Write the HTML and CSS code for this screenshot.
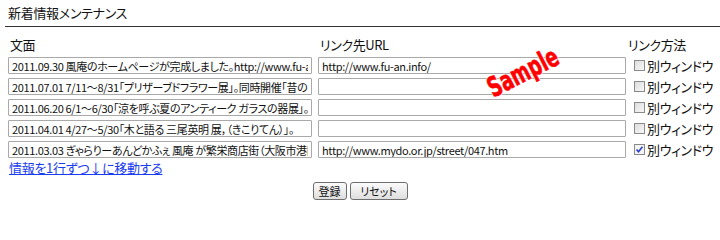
FILE: index.html
```html
<!DOCTYPE html>
<html lang="ja">
<head>
<meta charset="utf-8">
<title>新着情報メンテナンス</title>
<link rel="stylesheet" href="styles.css">
</head>
<body>
<div class="page">
  <h1 class="title">新着情報メンテナンス</h1>
  <div class="rule"></div>
  <form class="form">
    <div class="grid">
      <div class="head">文面</div>
      <div class="head">リンク先URL</div>
      <div class="head head-last">リンク方法</div>

      <input class="field" type="text" value="2011.09.30 風庵のホームページが完成しました。http://www.fu-an.info/">
      <input class="field" type="text" value="http://www.fu-an.info/">
      <label class="opt"><span class="box"></span>別ウィンドウ</label>

      <input class="field" type="text" value="2011.07.01 7/11～8/31「プリザーブドフラワー展」。同時開催「昔のあかり展」">
      <input class="field" type="text" value="">
      <label class="opt"><span class="box"></span>別ウィンドウ</label>

      <input class="field" type="text" value="2011.06.20 6/1～6/30「涼を呼ぶ夏のアンティーク ガラスの器展」。同時開催">
      <input class="field" type="text" value="">
      <label class="opt"><span class="box"></span>別ウィンドウ</label>

      <input class="field" type="text" value="2011.04.01 4/27～5/30「木と語る 三尾英明 展，（きこりてん）」。">
      <input class="field" type="text" value="">
      <label class="opt"><span class="box"></span>別ウィンドウ</label>

      <input class="field" type="text" value="2011.03.03 ぎゃらりーあんどかふぇ 風庵 が繁栄商店街（大阪市港区）（">
      <input class="field" type="text" value="http://www.mydo.or.jp/street/047.htm">
      <label class="opt"><span class="box checked"><svg viewBox="0 0 9 9" width="9" height="9"><path d="M1.5 4.5 L3.5 6.8 L7.5 1.8" fill="none" stroke="#2a3fd0" stroke-width="1.6"/></svg></span>別ウィンドウ</label>
    </div>
    <a class="move" href="#">情報を1行ずつ↓に移動する</a>
    <div class="buttons">
      <button type="button" class="btn btn-save">登録</button>
      <button type="reset" class="btn btn-reset">リセット</button>
    </div>
  </form>
  <div class="sample">Sample</div>
</div>
</body>
</html>
```
FILE: styles.css
```css
html, body {
  margin: 0;
  padding: 0;
  background: #ffffff;
}
body {
  font-family: "Noto Sans CJK JP", "DejaVu Sans", sans-serif;
  font-feature-settings: "palt";
  color: #111111;
  font-size: 13px;
}
.page {
  position: relative;
  width: 720px;
  height: 210px;
  overflow: hidden;
}
.title {
  margin: 0;
  padding: 4px 8px 0 8px;
  font-size: 13px;
  font-weight: normal;
  line-height: 17px;
  letter-spacing: -0.3px;
}
.rule {
  margin: 5px 0 0 5px;
  height: 1px;
  background: #333333;
}
.form {
  margin: 0;
  padding: 9px 0 0 8px;
}
.grid {
  display: grid;
  grid-template-columns: 304px 308px auto;
  grid-auto-rows: 17px;
  column-gap: 6px;
  row-gap: 4px;
}
.head {
  padding-left: 2px;
  font-size: 13px;
  line-height: 17px;
  letter-spacing: -0.4px;
}
.head-last {
  padding-left: 0;
  margin-left: -4px;
}
.field {
  box-sizing: border-box;
  height: 17px;
  width: 100%;
  margin: 0;
  padding: 0 3px;
  border: 1px solid #a9a9a9;
  border-radius: 1px;
  font-family: "Noto Sans CJK JP", "DejaVu Sans", sans-serif;
  font-feature-settings: "palt";
  font-size: 11px;
  letter-spacing: -0.35px;
  line-height: 15px;
  color: #111111;
  background: #ffffff;
  outline: none;
}
.opt {
  display: flex;
  align-items: center;
  font-size: 13px;
  line-height: 17px;
  letter-spacing: -0.4px;
  margin-left: 2px;
}
.box {
  box-sizing: border-box;
  display: inline-flex;
  align-items: center;
  justify-content: center;
  width: 11px;
  height: 11px;
  margin-right: 2px;
  border: 1px solid #8a8a8a;
  background: linear-gradient(135deg, #dcdcdc, #f8f8f8);
}
.box.checked {
  background: #f4f4f4;
}
.move {
  display: inline-block;
  margin-top: 2px;
  margin-left: 1px;
  font-size: 13px;
  line-height: 16px;
  color: #1a3cf0;
  text-decoration: underline;
  letter-spacing: -0.3px;
}
.buttons {
  display: flex;
  justify-content: center;
  gap: 3px;
  margin-top: 5px;
  padding-right: 8px;
}
.btn {
  box-sizing: border-box;
  height: 18px;
  margin: 0;
  padding: 0;
  border: 1px solid #6e6e6e;
  border-radius: 3px;
  background: linear-gradient(#fbfbfb, #dedede);
  font-family: "Noto Sans CJK JP", "DejaVu Sans", sans-serif;
  font-feature-settings: "palt";
  font-size: 11px;
  line-height: 16px;
  color: #111111;
}
.btn-save {
  width: 34px;
}
.btn-reset {
  width: 58px;
}
.sample {
  position: absolute;
  left: 474px;
  top: 58px;
  font-family: "DejaVu Sans Condensed", "DejaVu Sans", sans-serif;
  font-weight: bold;
  font-size: 26px;
  line-height: 28px;
  color: #ff0000;
  transform: rotate(-27deg) scale(0.78, 1.05);
  transform-origin: center;
  text-shadow: 1px 0 0 #fff, -1px 0 0 #fff, 0 1px 0 #fff, 0 -1px 0 #fff;
  -webkit-text-stroke: 0.6px #ff0000;
  pointer-events: none;
}
```
